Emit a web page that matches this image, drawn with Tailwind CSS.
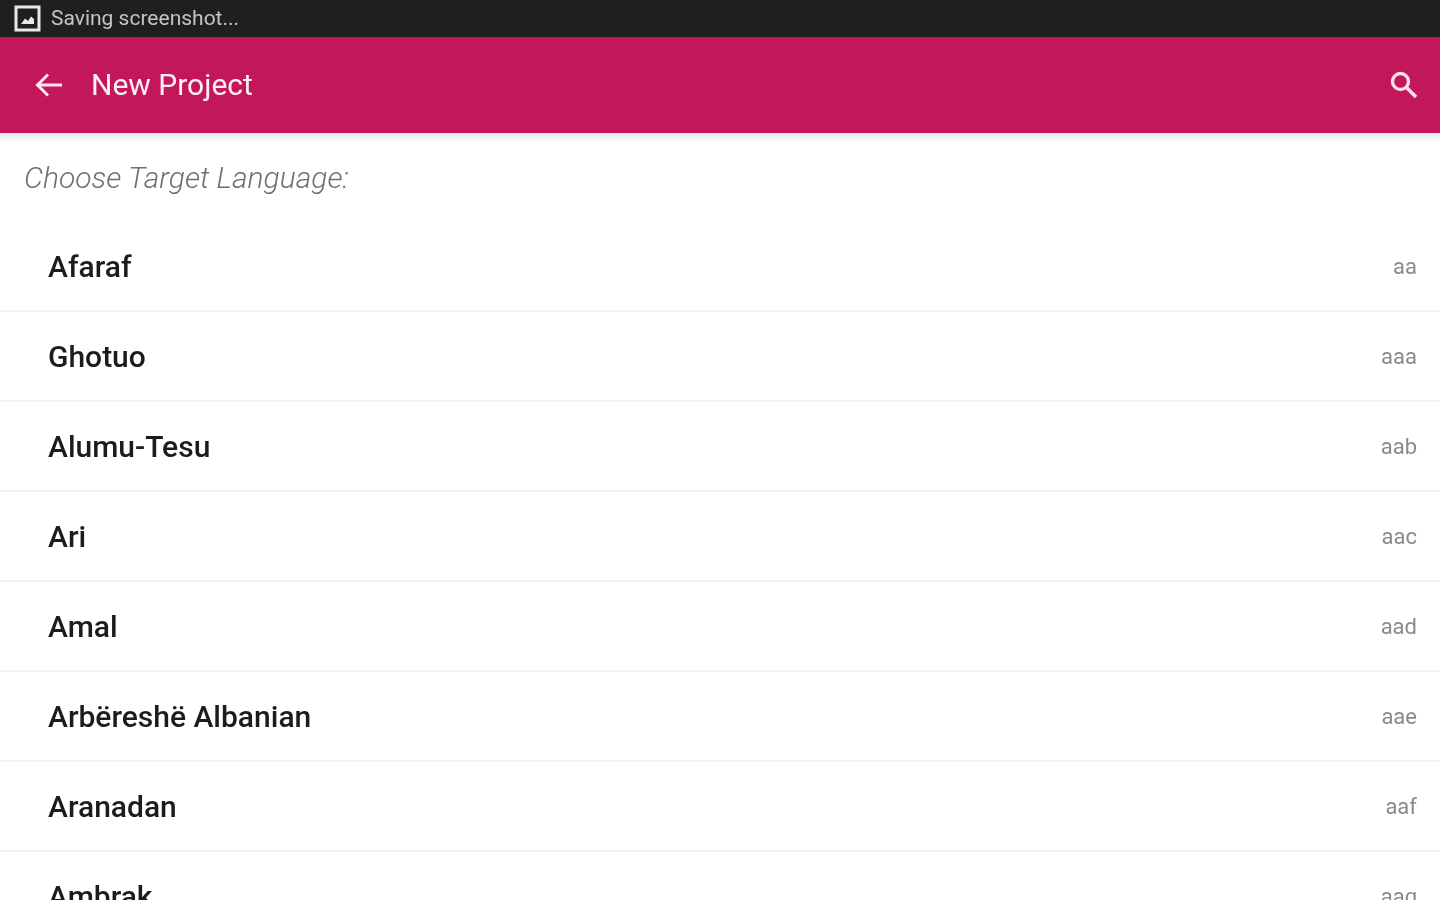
<!DOCTYPE html>
<html>
<head>
<script src="https://cdn.jsdelivr.net/npm/@tailwindcss/browser@4"></script>
</head>
<body class="bg-white">
<div class="w-[1440px] h-[900px] overflow-hidden bg-white flex flex-col font-['Roboto',sans-serif] blur-[0.6px]">
  <div class="h-[37px] shrink-0 bg-[#1f1f1f] flex items-center pl-[14px] gap-[10px]">
    <svg width="27" height="27" viewBox="0 0 27 27" fill="none">
      <rect x="2" y="2" width="23" height="23" stroke="#e8e8e8" stroke-width="3"/>
      <path d="M7 19 L11 13.5 L14 16 L17 11.5 L20 14 V19 Z" fill="#e8e8e8"/>
    </svg>
    <span class="text-[21px] leading-none text-[#c4c4c4]">Saving screenshot...</span>
  </div>
  <div class="h-[96px] shrink-0 bg-[#c2185b] flex items-center pl-[35px] pr-[21px] text-white">
    <svg width="28" height="28" viewBox="0 0 28 28" fill="none" stroke="#fbe6ee" stroke-width="3">
      <path d="M27 14 H3"/>
      <path d="M13 3.5 L2.5 14 L13 24.5"/>
    </svg>
    <span class="ml-[28px] text-[30px] leading-none text-[#fdeff4]">New Project</span>
    <svg class="ml-auto" width="30" height="30" viewBox="0 0 30 30" fill="none" stroke="#fbdde8">
      <circle cx="11.5" cy="11.5" r="8" stroke-width="3.4"/>
      <path d="M17.5 17.5 L27 27" stroke-width="3.6"/>
    </svg>
  </div>
  <div class="h-[10px] shrink-0 bg-gradient-to-b from-[#e9eceb] to-white"></div>
  <div class="h-[79px] shrink-0 flex items-start pl-[24px] pt-[9px]">
    <span class="text-[30px] leading-[52px] italic font-light text-[#6f6f6f]">Choose Target Language:</span>
  </div>
  <ul class="flex flex-col">
    <li class="h-[90px] shrink-0 flex items-center justify-between pl-[48px] pr-[23px] border-b-2 border-[#f3f3f3]"><span class="text-[30px] font-medium text-[#1c1c1c]">Afaraf</span><span class="text-[22px] text-[#8a8a8a]">aa</span></li>
    <li class="h-[90px] shrink-0 flex items-center justify-between pl-[48px] pr-[23px] border-b-2 border-[#f3f3f3]"><span class="text-[30px] font-medium text-[#1c1c1c]">Ghotuo</span><span class="text-[22px] text-[#8a8a8a]">aaa</span></li>
    <li class="h-[90px] shrink-0 flex items-center justify-between pl-[48px] pr-[23px] border-b-2 border-[#f3f3f3]"><span class="text-[30px] font-medium text-[#1c1c1c]">Alumu-Tesu</span><span class="text-[22px] text-[#8a8a8a]">aab</span></li>
    <li class="h-[90px] shrink-0 flex items-center justify-between pl-[48px] pr-[23px] border-b-2 border-[#f3f3f3]"><span class="text-[30px] font-medium text-[#1c1c1c]">Ari</span><span class="text-[22px] text-[#8a8a8a]">aac</span></li>
    <li class="h-[90px] shrink-0 flex items-center justify-between pl-[48px] pr-[23px] border-b-2 border-[#f3f3f3]"><span class="text-[30px] font-medium text-[#1c1c1c]">Amal</span><span class="text-[22px] text-[#8a8a8a]">aad</span></li>
    <li class="h-[90px] shrink-0 flex items-center justify-between pl-[48px] pr-[23px] border-b-2 border-[#f3f3f3]"><span class="text-[30px] font-medium text-[#1c1c1c]">Arbëreshë Albanian</span><span class="text-[22px] text-[#8a8a8a]">aae</span></li>
    <li class="h-[90px] shrink-0 flex items-center justify-between pl-[48px] pr-[23px] border-b-2 border-[#f3f3f3]"><span class="text-[30px] font-medium text-[#1c1c1c]">Aranadan</span><span class="text-[22px] text-[#8a8a8a]">aaf</span></li>
    <li class="h-[90px] shrink-0 flex items-center justify-between pl-[48px] pr-[23px] border-b-2 border-[#f3f3f3]"><span class="text-[30px] font-medium text-[#1c1c1c]">Ambrak</span><span class="text-[22px] text-[#8a8a8a]">aag</span></li>
  </ul>
</div>
</body>
</html>
